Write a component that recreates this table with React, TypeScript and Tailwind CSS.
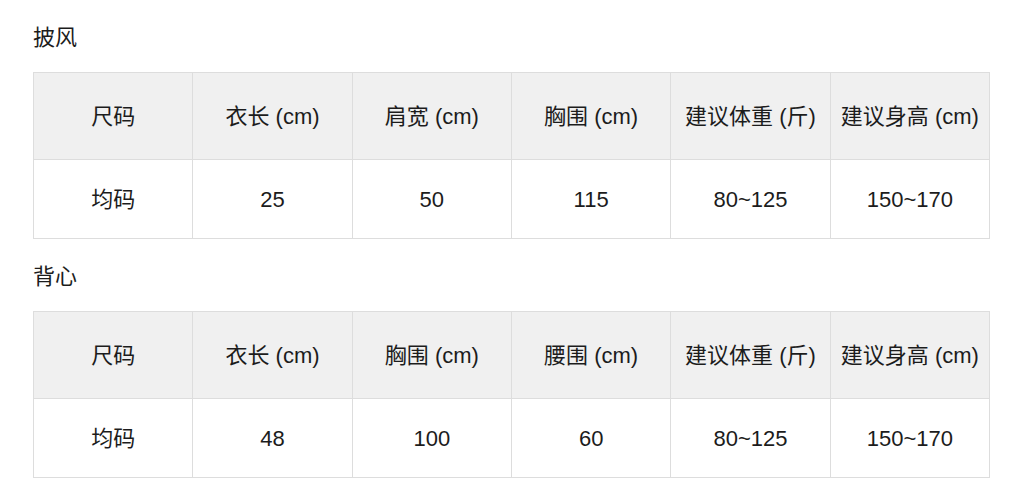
const font = {
  fontFamily: '"Liberation Sans", "Noto Sans CJK SC", sans-serif',
};

interface SizeTable {
  title: string;
  headers: string[];
  values: string[];
}

const tables: SizeTable[] = [
  {
    title: "披风",
    headers: ["尺码", "衣长 (cm)", "肩宽 (cm)", "胸围 (cm)", "建议体重 (斤)", "建议身高 (cm)"],
    values: ["均码", "25", "50", "115", "80~125", "150~170"],
  },
  {
    title: "背心",
    headers: ["尺码", "衣长 (cm)", "胸围 (cm)", "腰围 (cm)", "建议体重 (斤)", "建议身高 (cm)"],
    values: ["均码", "48", "100", "60", "80~125", "150~170"],
  },
];

const Table: React.FC<SizeTable> = ({ title, headers, values }) => {
  return (
    <div className="flex flex-col">
      <h2 className="h-[30px] leading-[30px] text-[22px] font-normal text-[#1c1c1c]">
        {title}
      </h2>
      <table className="mt-[19px] w-[957px] table-fixed border-collapse text-[22px] text-[#1c1c1c]">
        <thead>
          <tr className="bg-[#f0f0f0]">
            {headers.map((h) => (
              <th
                key={h}
                className="h-[87px] border border-[#dddddd] p-0 text-center font-normal whitespace-nowrap"
              >
                {h}
              </th>
            ))}
          </tr>
        </thead>
        <tbody>
          <tr>
            {values.map((v, i) => (
              <td
                key={i}
                className="h-[79px] border border-[#dddddd] p-0 text-center"
              >
                {v}
              </td>
            ))}
          </tr>
        </tbody>
      </table>
    </div>
  );
};

export default function App() {
  return (
    <div
      className="w-[1024px] h-[478px] bg-white pl-[33px] pt-[23px] flex flex-col gap-[23px] overflow-hidden"
      style={font}
    >
      {tables.map((t) => (
        <Table key={t.title} {...t} />
      ))}
    </div>
  );
}
